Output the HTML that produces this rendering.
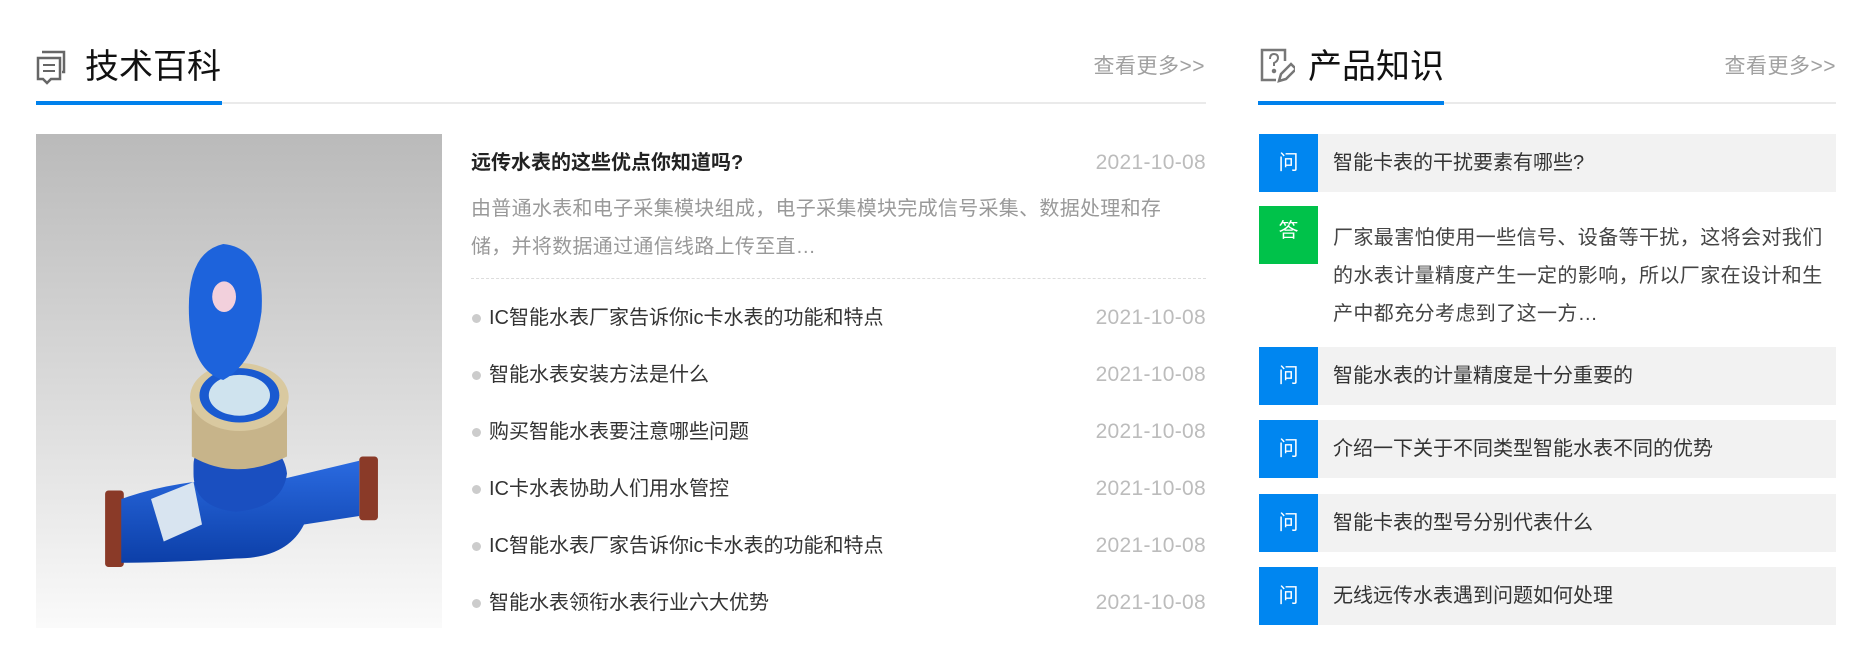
<!DOCTYPE html>
<html><head><meta charset="utf-8"><style>
*{margin:0;padding:0;box-sizing:border-box}
body{width:1865px;height:669px;background:#fff;font-family:"Liberation Sans","Noto Sans CJK SC",sans-serif;position:relative;overflow:hidden}
.a{position:absolute;white-space:nowrap}
.h{font-size:34px;color:#111;top:46px;line-height:42px}
.more{font-size:21px;color:#a0a0a0;top:54px;line-height:26px;letter-spacing:0.5px}
.gl{position:absolute;height:2px;background:#eaeaea;top:102px}
.bl{position:absolute;height:4px;background:#0081ec;top:101px}
.dt{font-size:21px;color:#bcbcbc;right:659px;letter-spacing:0.3px}
.li{font-size:20px;color:#333;left:489px}
.dot{position:absolute;left:472px;width:9px;height:9px;border-radius:50%;background:#ccc}
.q{position:absolute;left:1259px;width:577px;height:58px;background:#f2f2f2}
.q b{position:absolute;left:0;top:0;width:59px;height:58px;background:#0086f0;color:#fff;font-weight:normal;font-size:20px;line-height:58px;text-align:center}
.q span{position:absolute;left:74px;top:0;line-height:58px;font-size:20px;color:#333}
</style></head><body>
<svg class="a" style="left:36px;top:49px" width="30" height="36" viewBox="0 0 30 36" fill="none" stroke="#666" stroke-width="2.5"><path d="M6 3h22v20h-2"/><path d="M2 9h22v21H15l-4 4-4-4H2z"/><path d="M7 16h12M7 22h12" stroke-width="2"/></svg>
<div class="a h" style="left:85px">技术百科</div>
<div class="a more" style="right:660px">查看更多&gt;&gt;</div>
<div class="gl" style="left:36px;width:1170px"></div>
<div class="bl" style="left:36px;width:186px"></div>

<svg class="a" style="left:36px;top:134px" width="406" height="494" viewBox="0 0 406 494">
<defs><linearGradient id="g" x1="0" y1="0" x2="0" y2="1"><stop offset="0" stop-color="#bababa"/><stop offset="0.55" stop-color="#dcdcdc"/><stop offset="1" stop-color="#fafafa"/></linearGradient>
<linearGradient id="b" x1="0" y1="0" x2="0" y2="1"><stop offset="0" stop-color="#2a6ae0"/><stop offset="1" stop-color="#0c3fa8"/></linearGradient></defs>
<rect width="406" height="494" fill="url(#g)"/>
<g transform="translate(30,93) scale(0.85)">
<rect x="46" y="310" width="22" height="90" rx="4" fill="#8a3a28"/>
<rect x="345" y="270" width="22" height="75" rx="4" fill="#8a3a28"/>
<path d="M65 320 Q150 290 240 300 L345 275 L345 340 L280 350 Q260 390 200 390 Q120 395 65 395Z" fill="url(#b)"/>
<path d="M150 280 Q150 250 200 245 Q255 250 260 290 Q255 330 200 335 Q150 330 150 290Z" fill="#1a4fc0"/>
<path d="M148 200 L148 270 Q200 300 260 270 L260 200 Z" fill="#c7b48a"/>
<ellipse cx="204" cy="200" rx="58" ry="40" fill="#d9c9a0"/>
<ellipse cx="204" cy="198" rx="47" ry="32" fill="#1a5ad0"/>
<ellipse cx="204" cy="198" rx="36" ry="24" fill="#cfe3ee"/>
<path d="M145 110 Q140 30 185 20 Q235 25 230 100 Q222 160 185 180 Q150 170 145 110Z" fill="#1d63dc"/>
<ellipse cx="186" cy="82" rx="14" ry="18" fill="#f2d0dc"/>
<path d="M100 320 L150 300 L160 350 L115 370Z" fill="#d8e4f0"/>
</g>
</svg>

<div class="a" style="left:471px;top:149px;font-size:20px;font-weight:bold;color:#222;line-height:28px">远传水表的这些优点你知道吗?</div>
<div class="a dt" style="top:149px;line-height:28px">2021-10-08</div>
<div class="a" style="left:471px;top:190px;width:712px;white-space:normal;font-size:20px;color:#999;line-height:38px;letter-spacing:0.3px">由普通水表和电子采集模块组成，电子采集模块完成信号采集、数据处理和存储，并将数据通过通信线路上传至直…</div>
<div class="a" style="left:471px;top:278px;width:735px;border-top:1px dashed #ddd"></div>

<div class="dot" style="top:314px"></div><div class="a li" style="top:304px;line-height:28px">IC智能水表厂家告诉你ic卡水表的功能和特点</div><div class="a dt" style="top:304px;line-height:28px">2021-10-08</div>
<div class="dot" style="top:371px"></div><div class="a li" style="top:361px;line-height:28px">智能水表安装方法是什么</div><div class="a dt" style="top:361px;line-height:28px">2021-10-08</div>
<div class="dot" style="top:428px"></div><div class="a li" style="top:418px;line-height:28px">购买智能水表要注意哪些问题</div><div class="a dt" style="top:418px;line-height:28px">2021-10-08</div>
<div class="dot" style="top:485px"></div><div class="a li" style="top:475px;line-height:28px">IC卡水表协助人们用水管控</div><div class="a dt" style="top:475px;line-height:28px">2021-10-08</div>
<div class="dot" style="top:542px"></div><div class="a li" style="top:532px;line-height:28px">IC智能水表厂家告诉你ic卡水表的功能和特点</div><div class="a dt" style="top:532px;line-height:28px">2021-10-08</div>
<div class="dot" style="top:599px"></div><div class="a li" style="top:589px;line-height:28px">智能水表领衔水表行业六大优势</div><div class="a dt" style="top:589px;line-height:28px">2021-10-08</div>

<svg class="a" style="left:1259px;top:47px" width="36" height="38" viewBox="0 0 36 38" fill="none" stroke="#777" stroke-width="2.5"><path d="M26 14V3H3v30h14"/><path d="M11 12q0-5 4-5t4 4q0 3-4 5v3" stroke-width="2"/><circle cx="15" cy="24" r="1" fill="#777"/><path d="M20 34l2-7 10-10 5 5-10 10z"/></svg>
<div class="a h" style="left:1308px">产品知识</div>
<div class="a more" style="right:29px">查看更多&gt;&gt;</div>
<div class="gl" style="left:1258px;width:578px"></div>
<div class="bl" style="left:1258px;width:186px"></div>

<div class="q" style="top:134px"><b>问</b><span>智能卡表的干扰要素有哪些?</span></div>
<div class="a" style="left:1259px;top:206px;width:59px;height:58px;background:#00c24a;color:#fff;font-size:20px;line-height:50px;text-align:center">答</div>
<div class="a" style="left:1333px;top:219px;width:502px;white-space:normal;font-size:20px;color:#444;line-height:38px;letter-spacing:0.4px">厂家最害怕使用一些信号、设备等干扰，这将会对我们的水表计量精度产生一定的影响，所以厂家在设计和生产中都充分考虑到了这一方…</div>
<div class="q" style="top:347px"><b>问</b><span>智能水表的计量精度是十分重要的</span></div>
<div class="q" style="top:420px"><b>问</b><span>介绍一下关于不同类型智能水表不同的优势</span></div>
<div class="q" style="top:494px"><b>问</b><span>智能卡表的型号分别代表什么</span></div>
<div class="q" style="top:567px"><b>问</b><span>无线远传水表遇到问题如何处理</span></div>
</body></html>
